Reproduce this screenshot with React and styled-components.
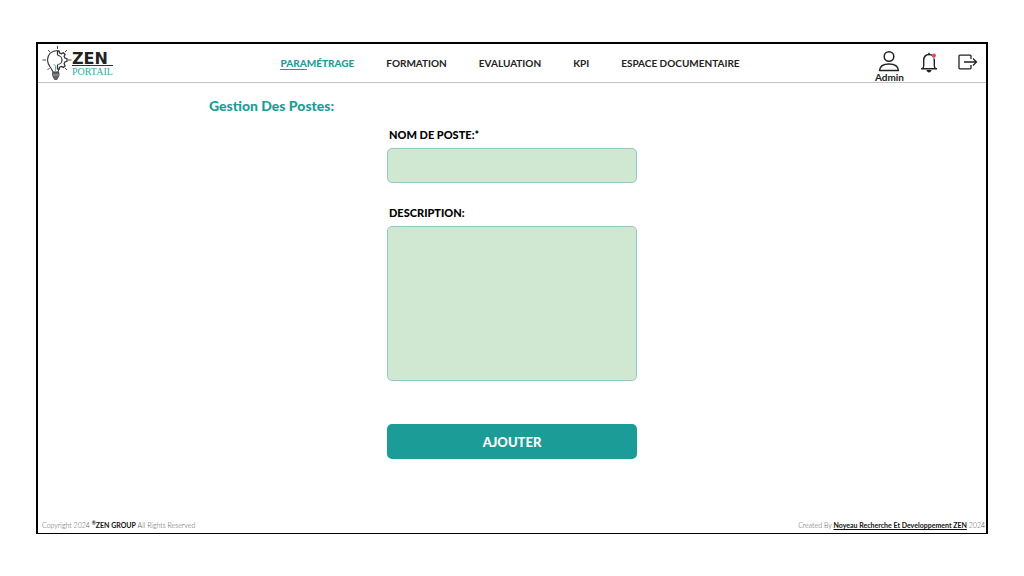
import React from 'react';
import styled, { createGlobalStyle, css } from 'styled-components';

const teal = '#1c9c96';

const GlobalStyle = createGlobalStyle`
  * { box-sizing: border-box; }
  body {
    margin: 0;
    background: #fff;
    color: #111;
    font-family: Lato, "Liberation Sans", sans-serif;
  }
`;

const Page = styled.div`
  display: flex;
  min-height: 100vh;
  padding: 42px 36px;
`;

const Frame = styled.div`
  flex: 1;
  display: flex;
  flex-direction: column;
  border: 2px solid #000;
  border-bottom-width: 1px;
`;

const Header = styled.header`
  display: grid;
  grid-template-columns: 1fr auto 1fr;
  align-items: center;
  height: 39px;
  padding: 0 8px 0 4px;
  border-bottom: 1px solid #c4c4c4;
`;

const Logo = styled.a`
  display: flex;
  align-items: center;
  color: #222;
  text-decoration: none;
`;

const LogoText = styled.span`
  display: flex;
  flex-direction: column;
  padding-top: 3px;
`;

const LogoName = styled.span`
  font: bold 16px/13px "DejaVu Sans", sans-serif;
  border-bottom: 1px solid #333;
`;

const LogoSub = styled.span`
  font: 10px/11px "Liberation Serif", serif;
  color: #35aaa2;
`;

const Nav = styled.nav`
  display: flex;
  gap: 32px;
`;

const NavLink = styled.a`
  font-size: 10px;
  font-weight: 700;
  line-height: 14px;
  color: #222;
  text-decoration: none;
  white-space: nowrap;
  ${({ $active }) => $active && css`
    color: ${teal};
    font-weight: 900;
  `}
`;

const Underlined = styled.span`
  border-bottom: 1px solid ${teal};
`;

const Actions = styled.div`
  display: flex;
  justify-content: flex-end;
  align-items: center;
  gap: 16px;
`;

const IconButton = styled.button`
  display: flex;
  flex-direction: column;
  align-items: center;
  padding: 0;
  border: 0;
  background: none;
  color: #222;
  font: 700 10px/10px Lato, sans-serif;
  cursor: pointer;
  svg { display: block; }
`;

const UserButton = styled(IconButton)`
  padding-top: 6px;
`;

const LogoutButton = styled(IconButton)`
  padding: 0 0 2px 4px;
`;

const Main = styled.main`
  flex: 1;
  width: 100%;
  max-width: 606px;
  margin: 0 auto;
  padding-top: 14px;
`;

const Title = styled.h1`
  margin: 0 0 12px;
  font-size: 14px;
  font-weight: 900;
  line-height: 18px;
  color: ${teal};
`;

const Form = styled.form`
  display: flex;
  flex-direction: column;
  width: 250px;
  margin: 0 auto;
`;

const Label = styled.label`
  padding-left: 2px;
  margin-bottom: 5px;
  font-size: 11px;
  font-weight: 900;
  line-height: 16px;
  color: #000;
`;

const field = css`
  width: 100%;
  border: 1px solid #8ecbc0;
  border-radius: 5px;
  background: #d0e7d2;
  padding: 8px;
  font: 12px/16px Lato, sans-serif;
  outline: none;
`;

const TextInput = styled.input`
  ${field}
  height: 35px;
  margin-bottom: 22px;
`;

const TextArea = styled.textarea`
  ${field}
  display: block;
  height: 155px;
  margin-bottom: 43px;
  resize: none;
`;

const Submit = styled.button`
  height: 35px;
  border: 0;
  border-radius: 5px;
  background: ${teal};
  color: #fff;
  font: 900 13px/18px Lato, sans-serif;
  cursor: pointer;
`;

const Footer = styled.footer`
  display: flex;
  justify-content: space-between;
  padding: 0 1px 3px 4px;
  font-size: 7px;
  font-weight: 300;
  line-height: 10px;
  color: #555;
`;

const Strong = styled.strong`
  font-weight: 700;
  color: #111;
`;

const Mark = styled.sup`
  font-size: 5px;
  line-height: 1;
`;

const CreditLink = styled.a`
  font-weight: 700;
  color: #111;
`;

const BulbIcon = () => (
  <svg width="30" height="36" viewBox="0 0 30 36" fill="none" stroke="#333" aria-hidden="true">
    <path d="M15.500 5.500C9.500 5.500 5.500 9.500 5.500 15c0 4.500 2.500 6.500 4 9l1.500 3h5l1-3" strokeWidth="1.100" />
    <path d="M15.500 1v3M6 5l2 2M.5 15H4M5.500 25l2-2M25 5l-2 2M25 25l-2-2M26 15h3.500" strokeWidth=".9" />
    <path
      d="M15.500 5.500v4.500M15.500 20v4.500M15.500 6h1.500l.7 2 1.800.7 2-1 1.600 1.600-1 2 .8 1.700 2.100.7v2.600l-2.100.7-.8 1.800 1 2-1.600 1.600-2-1-1.800.8-.7 2h-1.500"
      strokeWidth="1.300"
    />
    <path d="M15.500 10.500a4.500 4.500 0 0 1 0 9" strokeWidth="1.200" />
    <path d="M10.500 27.500h6.500v3l-2 4h-2.500l-2-4z" fill="#666" stroke="#444" strokeWidth=".8" />
    <path d="M10.500 30h6.500" stroke="#bbb" strokeWidth=".7" />
    <path d="M13.500 26v-5l-2-2" stroke="#45aaa4" strokeWidth=".9" />
  </svg>
);

const UserIcon = () => (
  <svg width="22" height="22" viewBox="0 0 22 22" fill="none" stroke="#222" strokeWidth="1.500" aria-hidden="true">
    <circle cx="11" cy="6.500" r="4.800" />
    <path d="M1.500 20.500c.4-4.200 4-6.500 9.500-6.500s9.100 2.300 9.500 6.500z" strokeLinejoin="round" />
  </svg>
);

const BellIcon = () => (
  <svg width="18" height="22" viewBox="0 0 18 22" fill="none" stroke="#222" strokeWidth="1.400" aria-hidden="true">
    <path d="M1 16.800h16M2.800 16.500c.7-1 .9-2 .9-3.500V8.500c0-3.500 2-6 5.300-6s5.300 2.500 5.300 6V13c0 1.500.2 2.500.9 3.500" />
    <path d="M9 .8v1.500" />
    <path d="M6.500 18h5c-.3 1.600-1.200 2.400-2.500 2.400S6.800 19.600 6.500 18z" fill="#222" stroke="none" />
    <path d="M12 2.500c1.500 1 2.300 2.500 2.300 4.500" stroke="#f3a3ad" strokeWidth="1.600" />
    <circle cx="14" cy="3.500" r="1.900" fill="#e9415a" stroke="none" />
  </svg>
);

const LogoutIcon = () => (
  <svg width="20" height="16" viewBox="0 0 20 16" fill="none" stroke="#222" strokeWidth="1.300" aria-hidden="true">
    <path d="M13 5V2q0-.8-.8-.8H1.800Q1 1.200 1 2v12q0 .8.800.8h10.400q.8 0 .8-.8v-3" />
    <path d="M6 8h12.500M15 4.500L18.500 8 15 11.500" />
  </svg>
);

export default function App() {
  return (
    <Page>
      <GlobalStyle />
      <Frame>
        <Header>
          <Logo href="#">
            <BulbIcon />
            <LogoText>
              <LogoName>ZEN</LogoName>
              <LogoSub>PORTAIL</LogoSub>
            </LogoText>
          </Logo>
          <Nav>
            <NavLink href="#" $active><Underlined>PARA</Underlined>MÉTRAGE</NavLink>
            <NavLink href="#">FORMATION</NavLink>
            <NavLink href="#">EVALUATION</NavLink>
            <NavLink href="#">KPI</NavLink>
            <NavLink href="#">ESPACE DOCUMENTAIRE</NavLink>
          </Nav>
          <Actions>
            <UserButton type="button"><UserIcon />Admin</UserButton>
            <IconButton type="button" aria-label="Notifications"><BellIcon /></IconButton>
            <LogoutButton type="button" aria-label="Déconnexion"><LogoutIcon /></LogoutButton>
          </Actions>
        </Header>
        <Main>
          <Title>Gestion Des Postes:</Title>
          <Form onSubmit={(e) => e.preventDefault()}>
            <Label htmlFor="nom">NOM DE POSTE:*</Label>
            <TextInput id="nom" type="text" required />
            <Label htmlFor="description">DESCRIPTION:</Label>
            <TextArea id="description" />
            <Submit type="submit">AJOUTER</Submit>
          </Form>
        </Main>
        <Footer>
          <span>Copyright 2024 <Strong><Mark>®</Mark>ZEN GROUP</Strong> All Rights Reserved</span>
          <span>Created By <CreditLink href="#">Noyeau Recherche Et Developpement ZEN</CreditLink> 2024</span>
        </Footer>
      </Frame>
    </Page>
  );
}
